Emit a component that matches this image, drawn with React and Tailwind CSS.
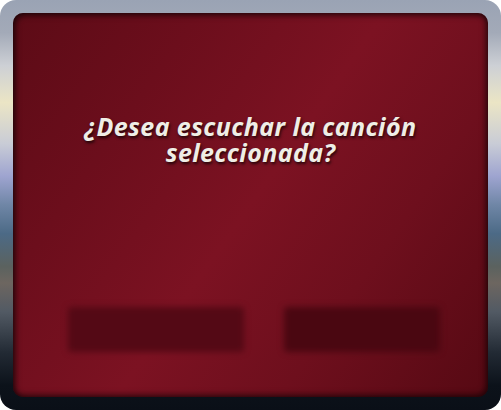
export default function App() {
  return (
    <div className="w-[501px] h-[410px] bg-white">
      <div className="w-[501px] h-[410px] rounded-[16px] p-[13px] bg-[linear-gradient(180deg,#9aa3b4_0%,#a3aab8_8%,#cdd0d5_16%,#ebe5c5_25%,#c9ccd6_35%,#9ea4d0_43%,#6f86a6_50%,#4c6a86_57%,#5b625f_65%,#6d6660_69%,#525a64_76%,#222a34_86%,#0c121a_94%,#0a0f17_100%)]">
        <div className="relative h-full w-full overflow-hidden rounded-[10px] bg-[linear-gradient(125deg,#5c0b16_0%,#6c0e1c_25%,#7c1222_50%,#6e0f1d_72%,#560913_100%)] shadow-[inset_2px_2px_6px_rgba(0,0,0,0.65),inset_-2px_-2px_6px_rgba(0,0,0,0.55)]">
          <div className="flex h-full flex-col pt-[100px]">
            <h1
              className="mx-auto text-center text-[25px] font-bold italic leading-[26px] tracking-[0.4px] text-[#efeee6] [text-shadow:1px_2px_3px_rgba(0,0,0,0.7)]"
              style={{ fontFamily: '"Open Sans", "DejaVu Sans", sans-serif' }}
            >
              ¿Desea escuchar la canción
              <br />
              seleccionada?
            </h1>
            <div className="mt-auto mb-[45px] flex gap-[40px] pl-[55px]">
              <div className="h-[45px] w-[176px] shrink-0 rounded-[4px] bg-[#540915] blur-[3px]" />
              <div className="h-[45px] w-[156px] shrink-0 rounded-[4px] bg-[#4a0711] blur-[3px]" />
            </div>
          </div>
        </div>
      </div>
    </div>
  );
}
